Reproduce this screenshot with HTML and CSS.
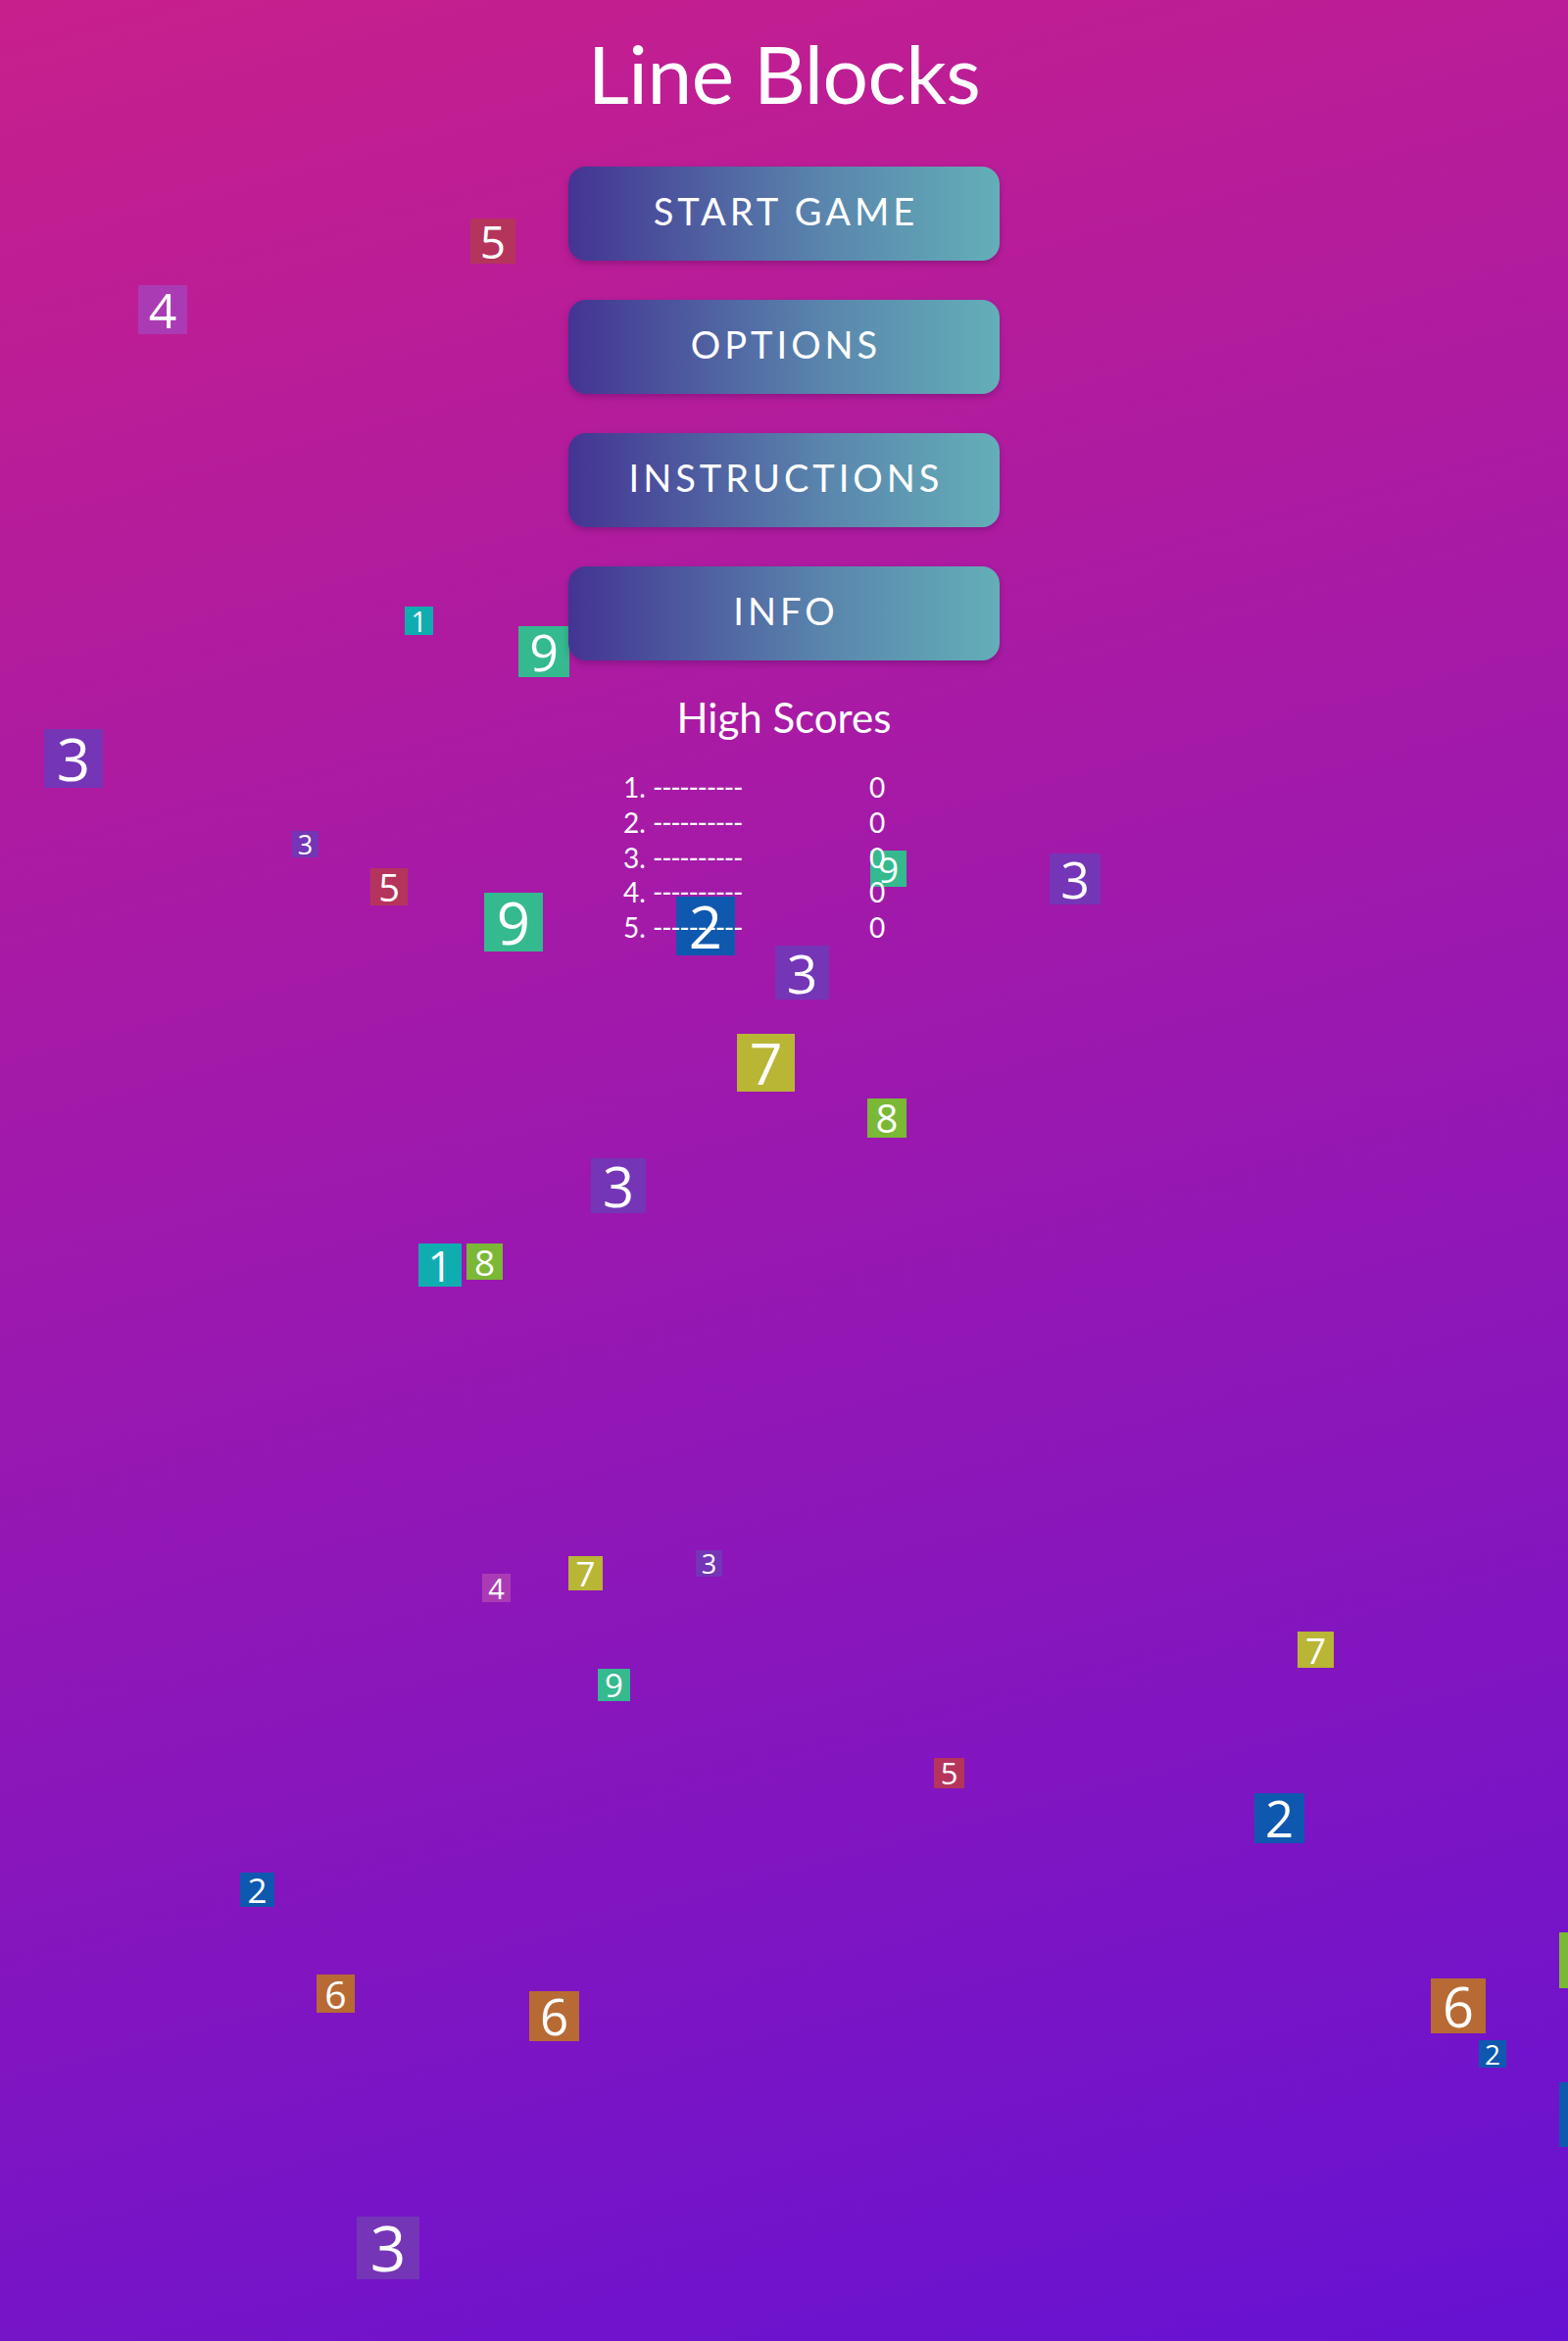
FILE: index.html
```html
<!DOCTYPE html>
<html lang="en">
<head>
<meta charset="utf-8">
<title>Line Blocks</title>
<link rel="stylesheet" href="styles.css">
</head>
<body>
<div class="page">
  <div class="blocks">
    <div class="blk red" style="--s:46px;left:480px;top:223px">5</div>
    <div class="blk mag" style="--s:50px;left:141px;top:291px">4</div>
    <div class="blk teal" style="--s:29px;left:413px;top:619px">1</div>
    <div class="blk green" style="--s:52px;left:529px;top:639px">9</div>
    <div class="blk purple" style="--s:60px;left:45px;top:744px">3</div>
    <div class="blk purple" style="--s:27px;left:298px;top:848px">3</div>
    <div class="blk red" style="--s:38px;left:378px;top:886px">5</div>
    <div class="blk green" style="--s:60px;left:494px;top:911px">9</div>
    <div class="blk green" style="--s:37px;left:888px;top:868px">9</div>
    <div class="blk purple" style="--s:52px;left:1071px;top:871px">3</div>
    <div class="blk blue" style="--s:60px;left:690px;top:915px">2</div>
    <div class="blk purple" style="--s:55px;left:791px;top:965px">3</div>
    <div class="blk olive" style="--s:59px;left:752px;top:1055px">7</div>
    <div class="blk lime" style="--s:40px;left:885px;top:1121px">8</div>
    <div class="blk purple" style="--s:56px;left:603px;top:1182px">3</div>
    <div class="blk teal" style="--s:44px;left:427px;top:1269px">1</div>
    <div class="blk lime" style="--s:37px;left:476px;top:1269px">8</div>
    <div class="blk mag" style="--s:29px;left:492px;top:1606px">4</div>
    <div class="blk olive" style="--s:35px;left:580px;top:1588px">7</div>
    <div class="blk purple" style="--s:27px;left:710px;top:1582px">3</div>
    <div class="blk green" style="--s:33px;left:610px;top:1703px">9</div>
    <div class="blk red" style="--s:31px;left:953px;top:1794px">5</div>
    <div class="blk olive" style="--s:37px;left:1324px;top:1665px">7</div>
    <div class="blk blue" style="--s:51px;left:1280px;top:1830px">2</div>
    <div class="blk blue" style="--s:35px;left:245px;top:1911px">2</div>
    <div class="blk orange" style="--s:39px;left:323px;top:2015px">6</div>
    <div class="blk orange" style="--s:51px;left:540px;top:2032px">6</div>
    <div class="blk orange" style="--s:56px;left:1460px;top:2019px">6</div>
    <div class="blk blue" style="--s:28px;left:1509px;top:2082px">2</div>
    <div class="blk lime" style="--s:57px;left:1591px;top:1972px">8</div>
    <div class="blk blue" style="--s:66px;left:1591px;top:2125px">2</div>
    <div class="blk purple" style="--s:64px;left:364px;top:2262px">3</div>
  </div>

  <main class="menu">
    <h1 class="title">Line Blocks</h1>
    <nav class="buttons">
      <button class="btn">START GAME</button>
      <button class="btn">OPTIONS</button>
      <button class="btn">INSTRUCTIONS</button>
      <button class="btn">INFO</button>
    </nav>
    <h2 class="hs-title">High Scores</h2>
    <div class="scores">
      <div class="name">1. <span class="dash">----------</span></div><div class="pts">0</div>
      <div class="name">2. <span class="dash">----------</span></div><div class="pts">0</div>
      <div class="name">3. <span class="dash">----------</span></div><div class="pts">0</div>
      <div class="name">4. <span class="dash">----------</span></div><div class="pts">0</div>
      <div class="name">5. <span class="dash">----------</span></div><div class="pts">0</div>
    </div>
  </main>
</div>
</body>
</html>
```

FILE: styles.css
```css
html, body {
  margin: 0;
  padding: 0;
}

body {
  background: linear-gradient(165deg, #c81f8c 0%, #9a18b0 50%, #6612d2 100%);
  min-height: 2389px;
  color: #ffffff;
  font-family: Lato, "Open Sans", sans-serif;
}

.page {
  position: relative;
  min-height: 2389px;
  overflow: hidden;
}

.blocks {
  position: absolute;
  inset: 0;
  overflow: hidden;
  z-index: 0;
}

.blk {
  position: absolute;
  width: var(--s);
  height: var(--s);
  font-size: var(--s);
  line-height: var(--s);
  text-align: center;
  font-family: "Open Sans", "Noto Sans", sans-serif;
  color: #ffffff;
}

.red { background: #b5345c; }
.mag { background: #ab3bb4; }
.teal { background: #10adb0; }
.green { background: #35b98f; }
.purple { background: #7435b6; }
.blue { background: #0f58b0; }
.olive { background: #b9b535; }
.lime { background: #7ab836; }
.orange { background: #b86a34; }

.menu {
  position: relative;
  z-index: 1;
  display: flex;
  flex-direction: column;
  align-items: center;
}

.title {
  margin: 24px 0 0;
  font-size: 82px;
  line-height: 100px;
  font-weight: 400;
  letter-spacing: -0.5px;
}

.buttons {
  margin-top: 46px;
  display: flex;
  flex-direction: column;
  gap: 40px;
}

.btn {
  width: 440px;
  height: 96px;
  border: none;
  border-radius: 18px;
  background: linear-gradient(90deg, #433493 0%, #5a86ad 60%, #63afb8 100%);
  box-shadow: 0 3px 6px rgba(40, 0, 60, 0.25);
  color: #ffffff;
  font-family: Lato, "Open Sans", sans-serif;
  font-size: 38px;
  letter-spacing: 4px;
  padding: 0 0 6px 4px;
  display: flex;
  align-items: center;
  justify-content: center;
}

.hs-title {
  margin: 33px 0 0;
  font-size: 42px;
  line-height: 50px;
  font-weight: 400;
}

.scores {
  margin-top: 29px;
  width: 328px;
  display: grid;
  grid-template-columns: 251px 77px;
  font-size: 28px;
  line-height: 35.75px;
}

.dash {
  letter-spacing: -1.3px;
}
```
